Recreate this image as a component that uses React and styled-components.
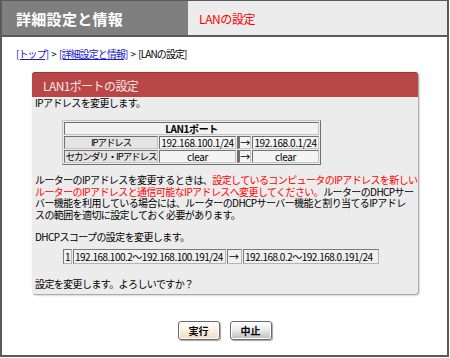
import React from "react";
import styled, { createGlobalStyle } from "styled-components";

const GlobalStyle = createGlobalStyle`
  html, body {
    margin: 0;
    padding: 0;
    background: #ffffff;
  }
  body {
    font-family: "Noto Sans CJK JP", "Liberation Sans", sans-serif;
    color: #000;
  }
`;

const ipRows = [
  { label: "IPアドレス", from: "192.168.100.1/24", to: "192.168.0.1/24" },
  { label: "セカンダリ・IPアドレス", from: "clear", to: "clear" },
];

const noteLines = [
  [
    { text: "ルーターのIPアドレスを変更するときは、" },
    { text: "設定しているコンピュータのIPアドレスを新しい", warn: true },
  ],
  [
    { text: "ルーターのIPアドレスと通信可能なIPアドレスへ変更してください。", warn: true },
    { text: "ルーターのDHCPサー" },
  ],
  [{ text: "バー機能を利用している場合には、ルーターのDHCPサーバー機能と割り当てるIPアドレ" }],
  [{ text: "スの範囲を適切に設定しておく必要があります。" }],
];

function App() {
  return (
    <>
      <GlobalStyle />
      <Frame>
        <Header>
          <HeaderTitle>詳細設定と情報</HeaderTitle>
          <HeaderSub>LANの設定</HeaderSub>
        </Header>

        <Content>
          <Breadcrumb>
            <Crumb href="#">[トップ]</Crumb>
            <Sep>&gt;</Sep>
            <Crumb href="#">[詳細設定と情報]</Crumb>
            <Sep>&gt;</Sep>
            [LANの設定]
          </Breadcrumb>

          <Panel>
            <PanelHead>LAN1ポートの設定</PanelHead>
            <PanelBody>
              <Line>IPアドレスを変更します。</Line>

              <PortTable>
                <tbody>
                  <tr>
                    <HeadCell colSpan={4}>LAN1ポート</HeadCell>
                  </tr>
                  {ipRows.map((row) => (
                    <tr key={row.label}>
                      <LabelCell>{row.label}</LabelCell>
                      <ValueCell $w={75}>{row.from}</ValueCell>
                      <ArrowCell>→</ArrowCell>
                      <ValueCell $w={65}>{row.to}</ValueCell>
                    </tr>
                  ))}
                </tbody>
              </PortTable>

              <Note>
                {noteLines.map((parts, i) => (
                  <NoteLine key={i}>
                    {parts.map((p, j) => (
                      <Chunk key={j} $warn={p.warn}>
                        {p.text}
                      </Chunk>
                    ))}
                  </NoteLine>
                ))}
              </Note>

              <Line $top={11}>DHCPスコープの設定を変更します。</Line>

              <ScopeTable>
                <tbody>
                  <tr>
                    <ScopeCell $w={6}>1</ScopeCell>
                    <ScopeCell $w={150}>192.168.100.2〜192.168.100.191/24</ScopeCell>
                    <ScopeCell $w={12}>→</ScopeCell>
                    <ScopeCell $w={133}>192.168.0.2〜192.168.0.191/24</ScopeCell>
                  </tr>
                </tbody>
              </ScopeTable>

              <Line $top={13}>設定を変更します。よろしいですか？</Line>
            </PanelBody>
          </Panel>
        </Content>

        <Buttons>
          <Button $tone="run">実行</Button>
          <Button $tone="stop">中止</Button>
        </Buttons>
      </Frame>
    </>
  );
}

export default App;

const Frame = styled.div`
  box-sizing: border-box;
  width: 449px;
  height: 357px;
  border: 2px solid #5a5a5a;
  border-top-width: 1px;
  display: flex;
  flex-direction: column;
`;

const Header = styled.div`
  display: flex;
  height: 34px;
  border-bottom: 2px solid #5a5a5a;
`;

const HeaderTitle = styled.div`
  width: 172px;
  padding-left: 14px;
  display: flex;
  align-items: center;
  background: #7f7f7f;
  color: #ffffff;
  font-size: 15px;
  font-weight: bold;
  letter-spacing: 0.3px;
`;

const HeaderSub = styled.div`
  flex: 1;
  padding-left: 11px;
  display: flex;
  align-items: center;
  background: #ececec;
  color: #ff0000;
  font-size: 12px;
  letter-spacing: -0.4px;
`;

const Content = styled.div`
  padding: 0 0 0 14px;
`;

const Breadcrumb = styled.div`
  margin-top: 11px;
  font-size: 10px;
  line-height: 12px;
  letter-spacing: -0.9px;
  color: #000;
`;

const Sep = styled.span`
  margin: 0 3px;
`;

const Crumb = styled.a`
  color: #1a1acc;
  text-decoration: underline;
`;

const Panel = styled.div`
  margin: 12px 0 0 16px;
  width: 386px;
  border-radius: 3px;
  box-shadow: 1px 1px 2px rgba(0, 0, 0, 0.45);
  background: #ececec;
`;

const PanelHead = styled.div`
  height: 24px;
  padding-left: 11px;
  display: flex;
  align-items: center;
  background: #b94747;
  border-top: 1px solid #9c3636;
  border-radius: 3px 3px 0 0;
  color: #f6e6e6;
  font-size: 12px;
  letter-spacing: -0.6px;
`;

const PanelBody = styled.div`
  padding: 0 3px 4px 3px;
  font-size: 10px;
  letter-spacing: -0.6px;
`;

const Line = styled.div`
  margin-top: ${({ $top }) => $top || 0}px;
  line-height: 12px;
  white-space: nowrap;
`;

const Note = styled.div`
  margin-top: 9px;
  display: flex;
  flex-direction: column;
`;

const NoteLine = styled.div`
  display: flex;
  height: 11.5px;
  white-space: nowrap;
`;

const Chunk = styled.span`
  display: inline-block;
  height: 11.5px;
  line-height: 11.5px;
  color: ${({ $warn }) => ($warn ? "#ff0000" : "#000000")};
`;

const PortTable = styled.table`
  margin: 11px 0 0 27px;
  border: 1px outset #c4c4c4;
  border-spacing: 1px;
  font-size: 10px;
  letter-spacing: -0.4px;

  td {
    border: 1px inset #c4c4c4;
    padding: 0;
    height: 11px;
    line-height: 11px;
    text-align: center;
    white-space: nowrap;
  }
`;

const HeadCell = styled.td`
  font-weight: bold;
  background: #f2f2f2;
`;

const LabelCell = styled.td`
  width: 92px;
  background: #e4e4e4;
  font-size: 9.5px;
  letter-spacing: -1.1px;
`;

const ValueCell = styled.td`
  width: ${({ $w }) => $w}px;
  background: #f4f4f4;
`;

const ArrowCell = styled.td`
  width: 10px;
  background: #f4f4f4;
  border-left-width: 3px !important;
`;

const ScopeTable = styled.table`
  margin: 5px 0 0 27px;
  border-spacing: 1px;
  font-size: 10px;
  letter-spacing: -0.5px;
`;

const ScopeCell = styled.td`
  width: ${({ $w }) => $w}px;
  height: 13px;
  padding: 0 0 0 1px;
  line-height: 13px;
  border: 1px solid #7a7a7a;
  border-right-color: #b5b5b5;
  border-bottom-color: #b5b5b5;
  white-space: nowrap;
  background: #f0f0f0;
`;

const Buttons = styled.div`
  margin-top: 27px;
  display: flex;
  justify-content: center;
  gap: 10px;
`;

const Button = styled.button`
  box-sizing: border-box;
  width: 42px;
  height: 19px;
  padding: 0;
  border: 1px solid #6a6a6a;
  border-radius: 3px;
  box-shadow: inset 0 0 0 1px #ffffff, 1px 1px 1px rgba(0, 0, 0, 0.35);
  background: ${({ $tone }) =>
    $tone === "run"
      ? "linear-gradient(#ffffff, #fbf2e8 45%, #f3d9bd)"
      : "linear-gradient(#ffffff, #ececec 45%, #bdbdbd)"};
  font-family: "Noto Sans CJK JP", sans-serif;
  font-size: 10px;
  font-weight: bold;
  color: #000;
`;
